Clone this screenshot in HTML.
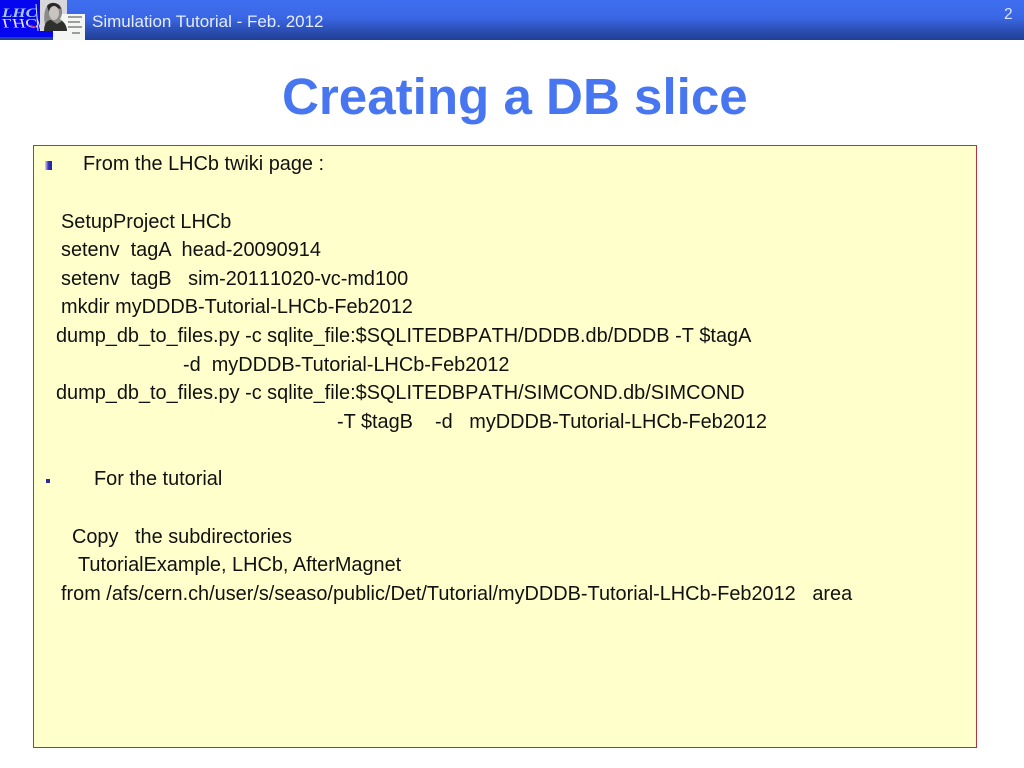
<!DOCTYPE html>
<html><head><meta charset="utf-8"><style>
html,body{margin:0;padding:0;background:#fff}
#p{position:relative;width:1024px;height:768px;overflow:hidden;background:#fff;font-family:"Liberation Sans",sans-serif}
#bar{position:absolute;left:0;top:0;width:1024px;height:40px;background:linear-gradient(#3f6ff0 0%,#3a66e4 45%,#2a4caf 80%,#203f95 100%)}
.t{position:absolute;white-space:pre;font-size:19.9px;line-height:22px;color:#111;filter:blur(.25px)}
.nk{font-kerning:none}
#box{position:absolute;left:33px;top:145px;width:942px;height:601px;background:#ffffcc;border:1px solid #b5343c}
</style></head><body><div id="p">
<div id="bar"></div>
<svg style="position:absolute;left:0;top:0" width="86" height="40" viewBox="0 0 86 40">
<rect x="0" y="0" width="53" height="37" fill="#0505f0"/>
<rect x="40" y="0" width="27" height="31" fill="#d8d8dc"/>
<rect x="53" y="14" width="32" height="26" fill="#f4f6f4"/>
<path d="M47 30 C43 22 44 12 46 8 C49 2 58 2 61 7 C63 11 62 16 60 19 C63 21 66 24 67 30 Z" fill="#8a8a88"/>
<path d="M47 6 C50 1 60 2 61 9 L57 8 C53 6 50 8 49 12 Z" fill="#2c2825"/>
<path d="M44 31 C44 24 47 20 51 20 L57 24 L62 21 C65 23 67 27 67 31 Z" fill="#2e302e"/>
<ellipse cx="54" cy="13" rx="5" ry="7" fill="#c8c4c0"/>
<path d="M38 31 L36 4 M37 18 L41 31" stroke="#e0e0f8" stroke-width="1" fill="none"/>
<g fill="#9a9f9a"><rect x="68" y="16" width="14" height="2"/><rect x="68" y="21" width="12" height="2"/><rect x="68" y="26" width="14" height="2"/><rect x="72" y="32" width="8" height="2"/></g>
<text x="2" y="17" font-family="Liberation Serif,serif" font-style="italic" font-weight="bold" font-size="13" fill="#a8c8ff" textLength="35" lengthAdjust="spacingAndGlyphs">LHC</text>
<text x="2" y="17" transform="translate(0,36) scale(1,-1)" font-family="Liberation Serif,serif" font-style="italic" font-size="13" fill="#e8e8ff" textLength="35" lengthAdjust="spacingAndGlyphs">LHC</text>
<path d="M28 25 L36 27" stroke="#e03060" stroke-width="1"/>
</svg>
<div class="t" style="left:92px;top:11px;font-size:17px;color:#e4ecff">Simulation Tutorial - Feb. 2012</div>
<div class="t" style="left:1004px;top:4px;font-size:15.5px;color:#dde6ff">2</div>
<div class="t" style="left:282px;top:69px;font-size:51.1px;line-height:56px;font-weight:bold;color:#4776f0">Creating a DB slice</div>
<div id="box"></div>
<svg style="position:absolute;left:44px;top:160px" width="10" height="11"><defs><linearGradient id="g"><stop offset="0" stop-color="#d8d8f0"/><stop offset=".5" stop-color="#3333bb"/><stop offset="1" stop-color="#222299"/></linearGradient></defs><rect x="1" y="1" width="7" height="9" fill="url(#g)"/></svg>
<div style="position:absolute;left:46px;top:479px;width:4px;height:4px;background:#2b2b9e"></div>
<div class="t" style="left:83px;top:153px">From the LHCb twiki page :</div>
<div class="t" style="left:61px;top:211px">SetupProject LHCb</div>
<div class="t" style="left:61px;top:239px">setenv  tagA  head-20090914</div>
<div class="t nk" style="left:61px;top:268px">setenv  tagB   sim-20111020-vc-md100</div>
<div class="t" style="left:61px;top:296px">mkdir myDDDB-Tutorial-LHCb-Feb2012</div>
<div class="t nk" style="left:56px;top:325px">dump_db_to_files.py -c sqlite_file:$SQLITEDBPATH/DDDB.db/DDDB -T $tagA</div>
<div class="t" style="left:183px;top:354px">-d  myDDDB-Tutorial-LHCb-Feb2012</div>
<div class="t nk" style="left:56px;top:382px">dump_db_to_files.py -c sqlite_file:$SQLITEDBPATH/SIMCOND.db/SIMCOND</div>
<div class="t" style="left:337px;top:411px">-T $tagB    -d   myDDDB-Tutorial-LHCb-Feb2012</div>
<div class="t" style="left:94px;top:468px">For the tutorial</div>
<div class="t" style="left:72px;top:526px">Copy   the subdirectories</div>
<div class="t" style="left:78px;top:554px">TutorialExample, LHCb, AfterMagnet</div>
<div class="t" style="left:61px;top:583px">from /afs/cern.ch/user/s/seaso/public/Det/Tutorial/myDDDB-Tutorial-LHCb-Feb2012   area</div>
</div></body></html>
